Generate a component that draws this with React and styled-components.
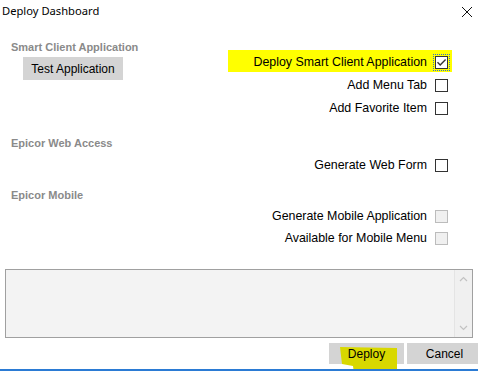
import React from 'react'
import styled, { createGlobalStyle } from 'styled-components'

const Global = createGlobalStyle`
  html, body {
    margin: 0;
    padding: 0;
    background: #fff;
  }
`

const Dialog = styled.div`
  width: 478px;
  height: 371px;
  box-sizing: border-box;
  overflow: hidden;
  background: #fff;
  border-bottom: 2px solid #2b7bd4;
  display: flex;
  flex-direction: column;
  font-family: 'Liberation Sans', Arial, sans-serif;
  font-size: 12px;
  color: #000;
`

const TitleBar = styled.div`
  height: 30px;
  display: flex;
  justify-content: space-between;
  align-items: flex-start;
  padding: 2px 3px 0 2px;
  box-sizing: border-box;
`

const Title = styled.div`
  font-family: 'Noto Sans', 'Open Sans', sans-serif;
  font-size: 11.2px;
  line-height: 18px;
`

const Close = styled.div`
  width: 12px;
  height: 12px;
  margin-top: 4px;
  margin-right: 2px;
  display: flex;
`

const Body = styled.div`
  padding: 10px 30px 0 11px;
  display: flex;
  flex-direction: column;
`

const Section = styled.div`
  display: grid;
  grid-template-columns: ${p => (p.split ? '1fr auto' : '1fr')};
  margin-top: ${p => p.top || 0}px;
`

const SideCol = styled.div`
  display: flex;
  flex-direction: column;
  align-items: flex-start;
`

const SectionLabel = styled.div`
  font-size: 11px;
  font-weight: bold;
  line-height: 14px;
  color: #8a8a8a;
`

const AppButton = styled.div`
  margin: 3px 0 0 12px;
  width: 100px;
  height: 23px;
  background: #d4d4d4;
  display: flex;
  align-items: center;
  justify-content: center;
  font-size: 12px;
`

const Options = styled.div`
  display: flex;
  flex-direction: column;
  align-items: flex-end;
  padding-top: ${p => p.pad || 0}px;
  gap: ${p => p.gap || 0}px;
`

const OptionRow = styled.label`
  position: relative;
  height: 22px;
  display: flex;
  align-items: center;
  gap: 8px;
  white-space: nowrap;
  font-size: 12.4px;

  &::before {
    content: '';
    display: ${p => (p.marked ? 'block' : 'none')};
    position: absolute;
    left: -25px;
    right: -4px;
    top: -1px;
    bottom: 1px;
    background: #ffff00;
    z-index: 0;
  }

  & > * {
    position: relative;
    z-index: 1;
  }
`

const Box = styled.span`
  width: 13px;
  height: 13px;
  box-sizing: border-box;
  border: 1px solid ${p => (p.disabled ? '#bcbcbc' : '#333')};
  background: ${p => (p.disabled ? '#f0f0f0' : '#fff')};
  display: flex;
  align-items: center;
  justify-content: center;
  outline: ${p => (p.focused ? '1px dotted #2f6fd0' : 'none')};
  outline-offset: 1px;
`

const Log = styled.div`
  margin: 20px 5px 0 5px;
  height: 69px;
  box-sizing: border-box;
  border: 1px solid #a0a0a0;
  background: #f3f3f3;
  display: flex;
  justify-content: flex-end;
`

const ScrollBar = styled.div`
  width: 17px;
  border-left: 1px solid #e4e4e4;
  background: #f0f0f0;
  display: flex;
  flex-direction: column;
  justify-content: space-between;
  align-items: center;
  padding: 6px 0;
`

const Footer = styled.div`
  margin-top: 5px;
  display: flex;
  justify-content: flex-end;
  gap: 3px;
  margin-right: -4px;
`

const Button = styled.div`
  position: relative;
  width: 75px;
  height: 21px;
  background: #d4d4d4;
  display: flex;
  align-items: center;
  justify-content: center;
  font-size: 12px;
`

const Scribble = styled.svg`
  position: absolute;
  left: 11px;
  top: 4px;
  overflow: visible;
`

const ButtonText = styled.span`
  position: relative;
`

const Check = ({ checked, disabled, focused }) => (
  <Box disabled={disabled} focused={focused}>
    {checked && (
      <svg width="11" height="11" viewBox="0 0 11 11">
        <path d="M1.5 5.2 L4.2 8 L9.6 2.4" fill="none" stroke="#333" strokeWidth="1.4" />
      </svg>
    )}
  </Box>
)

const Option = ({ label, ...rest }) => (
  <OptionRow marked={rest.marked}>
    <span>{label}</span>
    <Check checked={rest.checked} disabled={rest.disabled} focused={rest.focused} />
  </OptionRow>
)

const Chevron = ({ up }) => (
  <svg width="9" height="6" viewBox="0 0 9 6">
    <path d={up ? 'M1 5 L4.5 1.5 L8 5' : 'M1 1 L4.5 4.5 L8 1'} fill="none" stroke="#c2c2c2" strokeWidth="1.2" />
  </svg>
)

const App = () => {
  return (
    <Dialog>
      <Global />
      <TitleBar>
        <Title>Deploy Dashboard</Title>
        <Close>
          <svg width="12" height="12" viewBox="0 0 12 12">
            <path d="M1 1 L11 11 M11 1 L1 11" stroke="#111" strokeWidth="1" />
          </svg>
        </Close>
      </TitleBar>

      <Body>
        <Section split>
          <SideCol>
            <SectionLabel>Smart Client Application</SectionLabel>
            <AppButton>Test Application</AppButton>
          </SideCol>
          <Options pad={11} gap={1}>
            <Option label="Deploy Smart Client Application" checked marked focused />
            <Option label="Add Menu Tab" />
            <Option label="Add Favorite Item" />
          </Options>
        </Section>

        <Section top={17}>
          <SectionLabel>Epicor Web Access</SectionLabel>
          <Options pad={4}>
            <Option label="Generate Web Form" />
          </Options>
        </Section>

        <Section top={12}>
          <SectionLabel>Epicor Mobile</SectionLabel>
          <Options pad={3}>
            <Option label="Generate Mobile Application" disabled />
            <Option label="Available for Mobile Menu" disabled />
          </Options>
        </Section>
      </Body>

      <Log>
        <ScrollBar>
          <Chevron up />
          <Chevron />
        </ScrollBar>
      </Log>

      <Footer>
        <Button>
          <Scribble width="60" height="26">
            <path d="M0 0 L57 1 L57 24 L46 24 L44 27 L14 26 L13 19 L2 17 Z" fill="#d8d800" />
          </Scribble>
          <ButtonText>Deploy</ButtonText>
        </Button>
        <Button>Cancel</Button>
      </Footer>
    </Dialog>
  )
}

export default App
